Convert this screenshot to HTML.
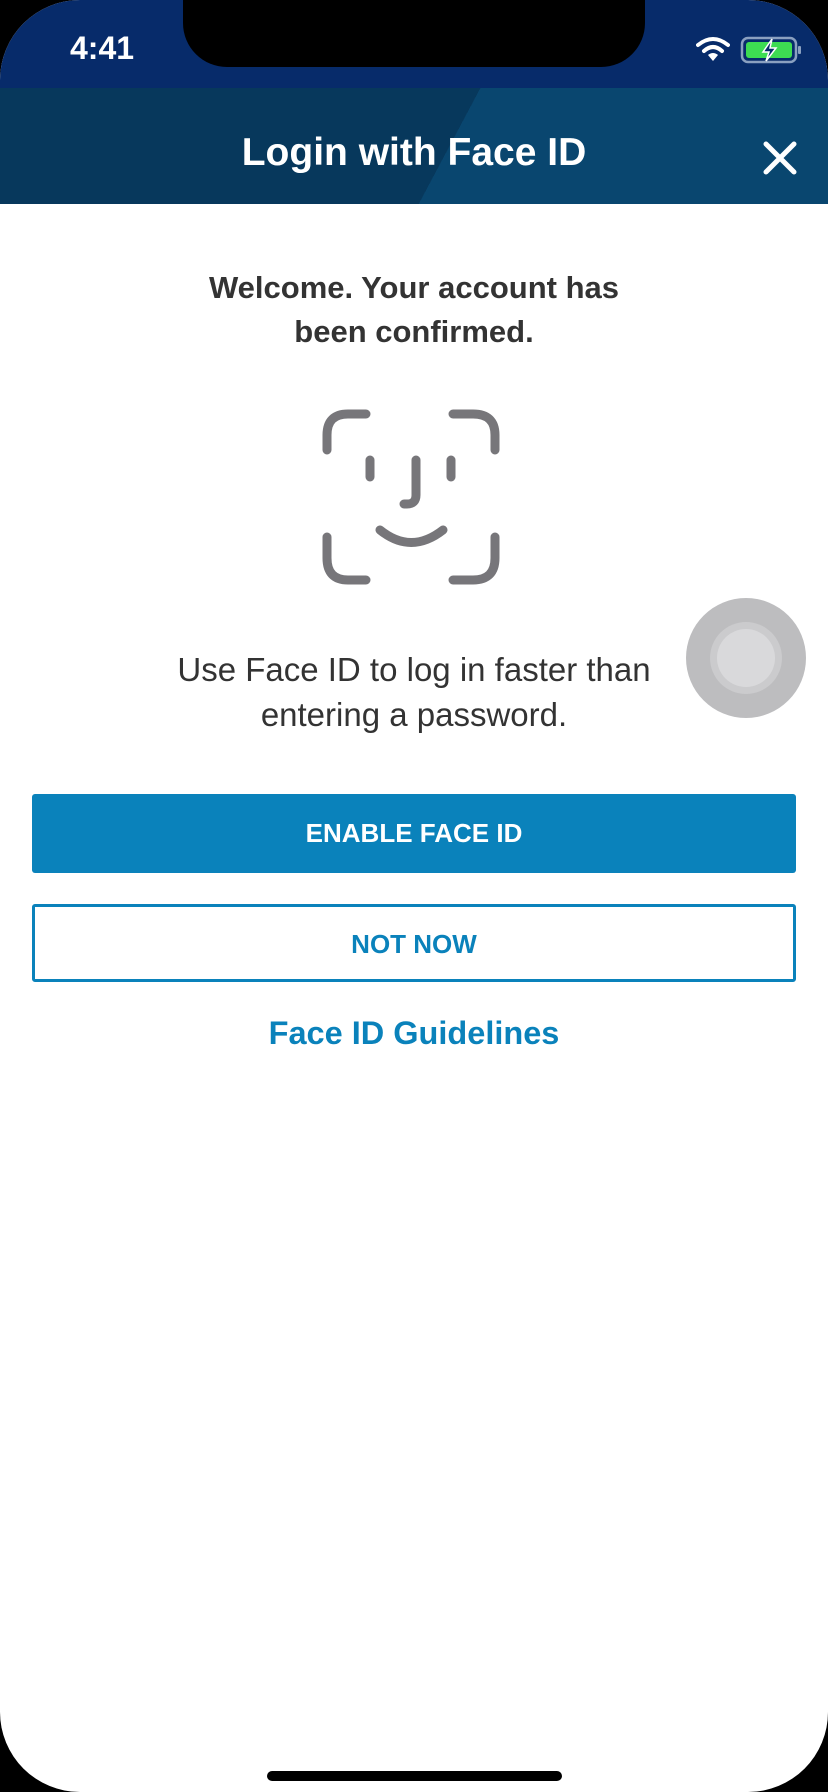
<!DOCTYPE html>
<html><head><meta charset="utf-8"><style>
html,body{margin:0;padding:0;background:#000;}
.screen{position:relative;width:828px;height:1792px;background:#fff;border-radius:80px;overflow:hidden;font-family:"Liberation Sans",sans-serif;}
.status{position:absolute;left:0;top:0;width:828px;height:88px;background:#072b6a;}
.notch{position:absolute;left:183px;top:0;width:462px;height:67px;background:#000;border-radius:0 0 44px 44px;}
.nav{position:absolute;left:0;top:88px;width:828px;height:116px;background:linear-gradient(118deg,#07385c 0,#07385c 54%,#09466f 54%,#09466f 100%);}
.time{position:absolute;left:70px;top:30px;color:#fff;font-size:32px;font-weight:bold;}
.title{position:absolute;left:0;width:828px;top:131px;text-align:center;color:#fff;font-size:39px;font-weight:bold;}
.txt{position:absolute;left:0;width:828px;text-align:center;}
.btn{position:absolute;left:32px;width:764px;box-sizing:border-box;text-align:center;font-weight:bold;font-size:26px;border-radius:3px;}
</style></head><body>
<div class="screen">
<div class="status"></div>
<div class="notch"></div>
<div class="time">4:41</div>
<svg style="position:absolute;left:696px;top:36px" width="34" height="26" viewBox="0 0 34 26"><path d="M2 9 Q17 -3 32 9" stroke="#fff" stroke-width="4" fill="none" stroke-linecap="round"/><path d="M8 15 Q17 7 26 15" stroke="#fff" stroke-width="4" fill="none" stroke-linecap="round"/><path d="M12 19 L17 25 L22 19 Q17 15 12 19Z" fill="#fff"/></svg>
<svg style="position:absolute;left:740px;top:36px" width="64" height="28" viewBox="0 0 64 28"><rect x="2" y="2" width="54" height="24" rx="6" fill="none" stroke="#8aa0c0" stroke-width="2.5"/><rect x="6" y="6" width="46" height="16" rx="3" fill="#3ddc52"/><rect x="58" y="10" width="3" height="8" rx="1" fill="#8aa0c0"/><path d="M32 3 L23 16 L29 16 L26 25 L36 12 L30 12 Z" fill="#072b6a" stroke="#fff" stroke-width="1.5"/></svg>
<div class="nav"></div>
<div class="title">Login with Face ID</div>
<svg style="position:absolute;left:762px;top:140px" width="36" height="36" viewBox="0 0 36 36"><path d="M4 4 L32 32 M32 4 L4 32" stroke="#fff" stroke-width="5" stroke-linecap="round"/></svg>
<div class="txt" style="top:266px;font-size:31px;font-weight:bold;color:#333;line-height:44px;">Welcome. Your account has<br>been confirmed.</div>
<svg style="position:absolute;left:318px;top:405px" width="190" height="190" viewBox="0 0 190 190" fill="none" stroke="#77767a" stroke-width="9" stroke-linecap="round">
<path d="M9 45 V30 Q9 9 30 9 H48"/><path d="M135 9 H155 Q177 9 177 30 V45"/><path d="M9 132 V153 Q9 175 30 175 H48"/><path d="M135 175 H155 Q177 175 177 153 V132"/>
<path d="M52 55 V72"/><path d="M133 55 V72"/><path d="M98 55 V90 Q98 99 89 99 H86"/><path d="M62 125 Q93 150 125 125"/>
</svg>
<div class="txt" style="top:648px;font-size:33px;color:#333;line-height:44.5px;">Use Face ID to log in faster than<br>entering a password.</div>
<div style="position:absolute;left:686px;top:598px;width:120px;height:120px;border-radius:50%;background:#bdbdbf;"></div>
<div style="position:absolute;left:710px;top:622px;width:72px;height:72px;border-radius:50%;background:#cbcbcd;"></div>
<div style="position:absolute;left:717px;top:629px;width:58px;height:58px;border-radius:50%;background:#d9d9db;"></div>
<div class="btn" style="top:794px;height:79px;line-height:79px;background:#0a82bb;color:#fff;">ENABLE FACE ID</div>
<div class="btn" style="top:904px;height:78px;line-height:74px;border:3px solid #0a82bb;color:#0a82bb;">NOT NOW</div>
<div class="txt" style="top:1015px;font-size:32.5px;font-weight:bold;color:#0a82bb;">Face ID Guidelines</div>
<div style="position:absolute;left:267px;top:1771px;width:295px;height:10px;border-radius:5px;background:#000;"></div>
</div>
</body></html>
